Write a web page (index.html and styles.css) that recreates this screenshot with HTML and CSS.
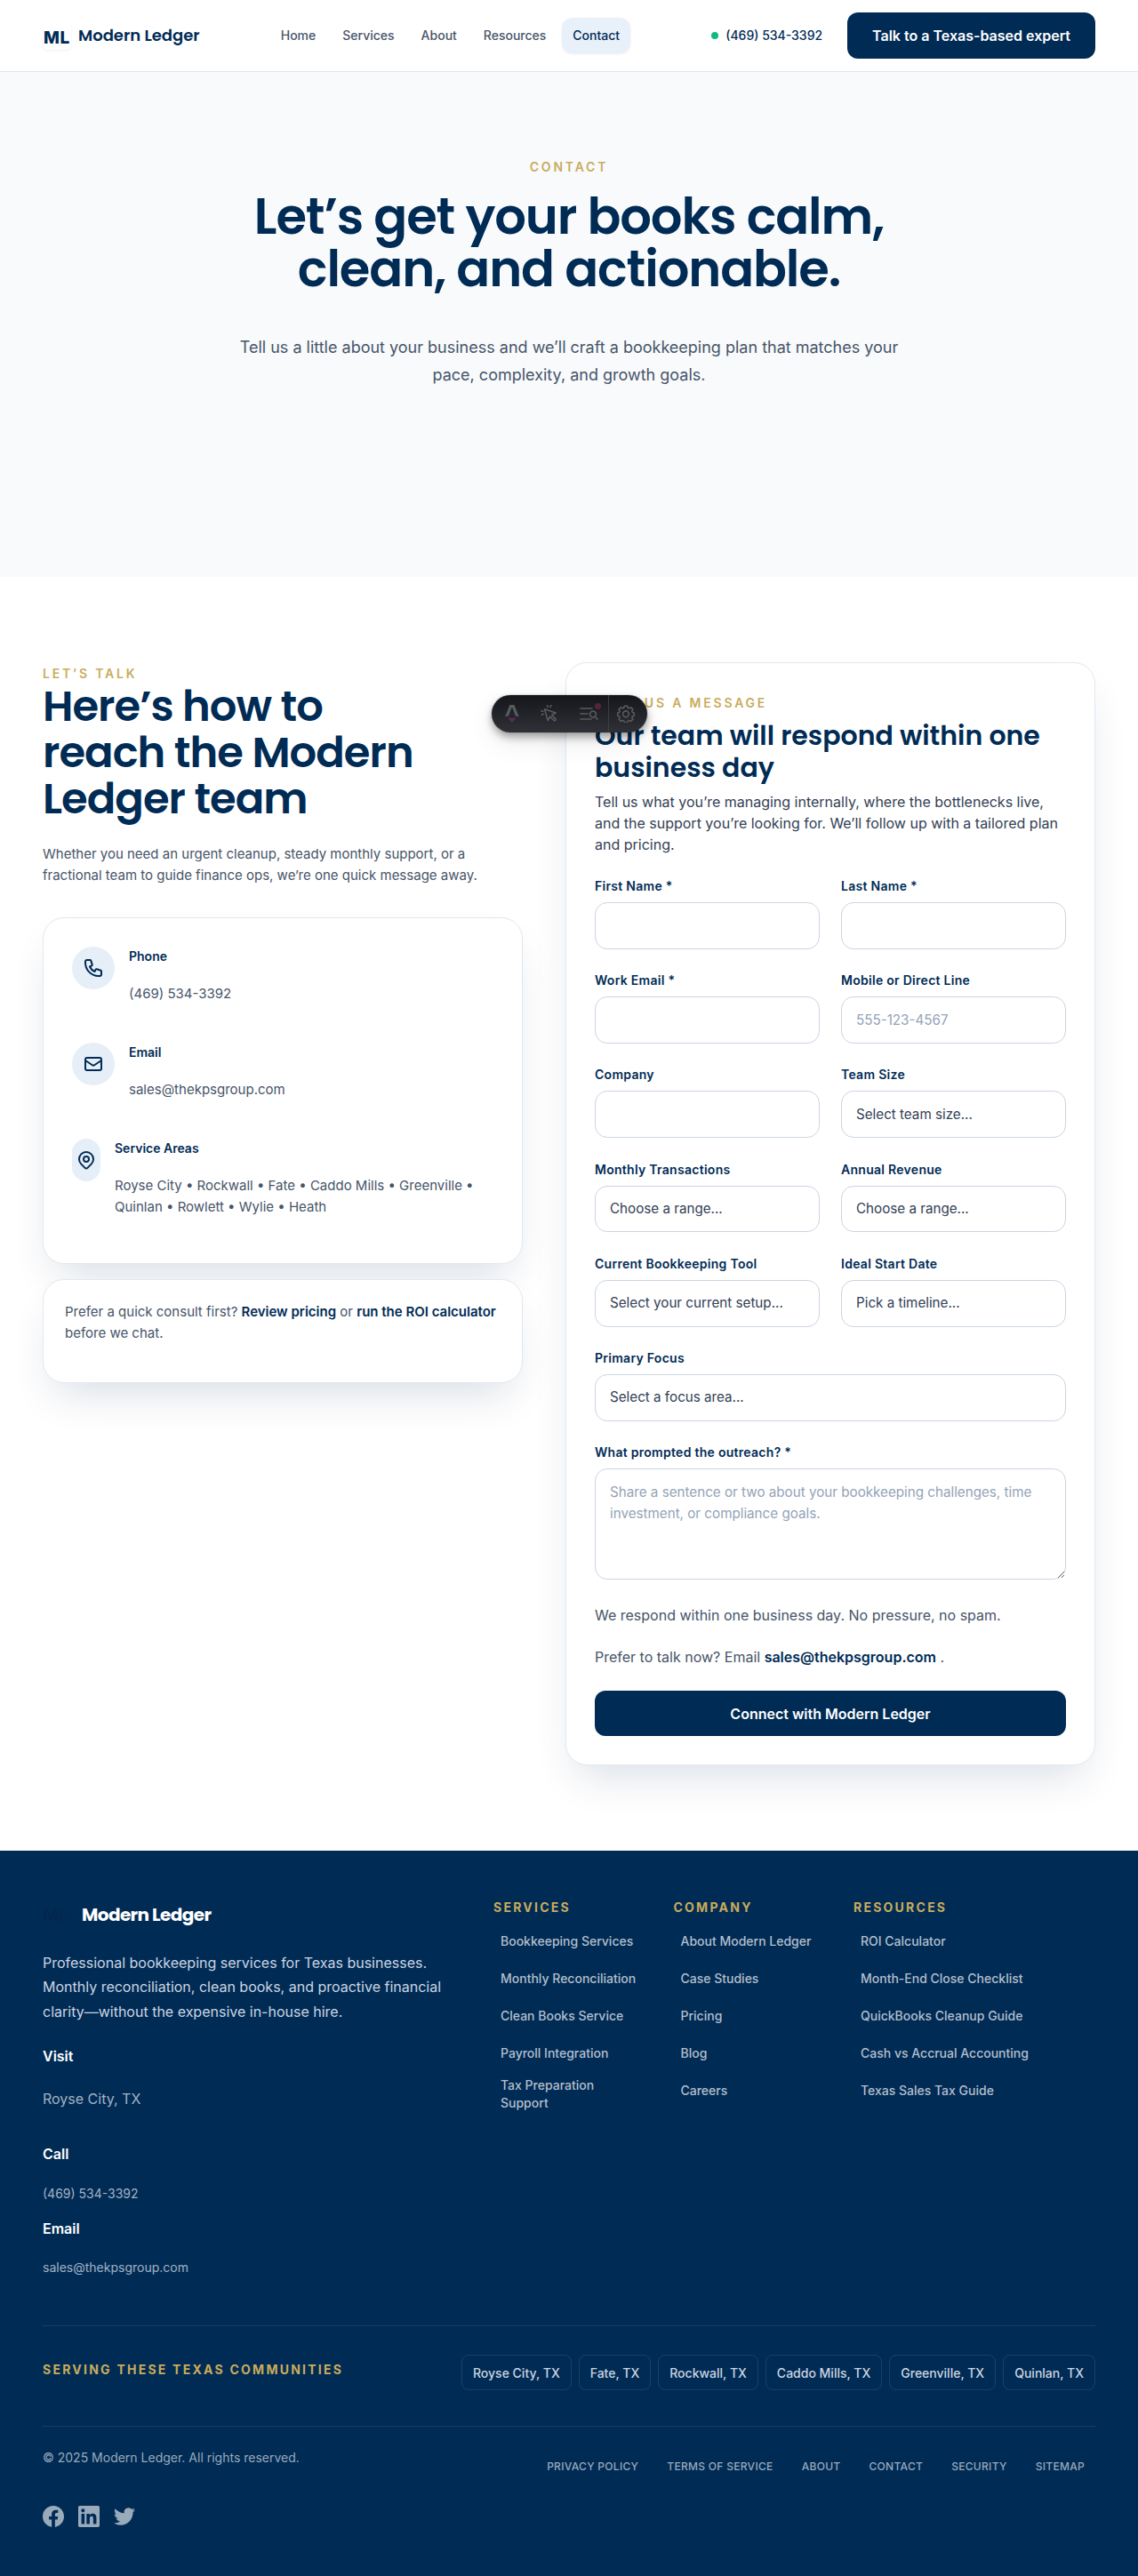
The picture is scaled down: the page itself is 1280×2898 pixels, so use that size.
FILE: index.html
```html
<!DOCTYPE html>
<html lang="en">
<head>
<meta charset="utf-8">
<title>Contact | Modern Ledger</title>
<link rel="stylesheet" href="styles.css">
</head>
<body>
<header class="site-header">
  <a class="brand" href="#"><span class="brand-mark">ML</span><span class="brand-name">Modern Ledger</span></a>
  <nav class="nav">
    <a href="#">Home</a><a href="#">Services</a><a href="#">About</a><a href="#">Resources</a><a class="active" href="#">Contact</a>
  </nav>
  <div class="header-cta">
    <a class="header-phone" href="#"><i class="status-dot"></i>(469) 534-3392</a>
    <a class="btn" href="#">Talk to a Texas-based expert</a>
  </div>
</header>

<main>
  <section class="hero">
    <p class="eyebrow">CONTACT</p>
    <h1>Let’s get your books calm, clean, and actionable.</h1>
    <p class="hero-text">Tell us a little about your business and we’ll craft a bookkeeping plan that matches your pace, complexity, and growth goals.</p>
  </section>

  <section class="contact">
    <div class="intro">
      <p class="eyebrow">LET’S TALK</p>
      <h2>Here’s how to reach the Modern Ledger team</h2>
      <p class="intro-text">Whether you need an urgent cleanup, steady monthly support, or a fractional team to guide finance ops, we’re one quick message away.</p>
      <ul class="card methods">
        <li>
          <span class="method-icon"><svg viewBox="0 0 24 24"><path d="M3 5a2 2 0 012-2h3.28a1 1 0 01.948.684l1.498 4.493a1 1 0 01-.502 1.21l-2.257 1.13a11.042 11.042 0 005.516 5.516l1.13-2.257a1 1 0 011.21-.502l4.493 1.498a1 1 0 01.684.949V19a2 2 0 01-2 2h-1C9.716 21 3 14.284 3 6V5z"/></svg></span>
          <div><h3>Phone</h3><p>(469) 534-3392</p></div>
        </li>
        <li>
          <span class="method-icon"><svg viewBox="0 0 24 24"><path d="M3 8l7.89 5.26a2 2 0 002.22 0L21 8M5 19h14a2 2 0 002-2V7a2 2 0 00-2-2H5a2 2 0 00-2 2v10a2 2 0 002 2z"/></svg></span>
          <div><h3>Email</h3><p>sales@thekpsgroup.com</p></div>
        </li>
        <li>
          <span class="method-icon narrow"><svg viewBox="0 0 24 24"><path d="M17.657 16.657L13.414 20.9a1.998 1.998 0 01-2.827 0l-4.244-4.243a8 8 0 1111.314 0z"/><path d="M15 11a3 3 0 11-6 0 3 3 0 016 0z"/></svg></span>
          <div><h3>Service Areas</h3><p>Royse City • Rockwall • Fate • Caddo Mills • Greenville • Quinlan • Rowlett • Wylie • Heath</p></div>
        </li>
      </ul>
      <div class="card consult"><p>Prefer a quick consult first? <a href="#">Review pricing</a> or <a href="#">run the ROI calculator</a> before we chat.</p></div>
    </div>

    <form class="card form">
      <p class="eyebrow">SEND US A MESSAGE</p>
      <h3>Our team will respond within one business day</h3>
      <p class="form-text">Tell us what you’re managing internally, where the bottlenecks live, and the support you’re looking for. We’ll follow up with a tailored plan and pricing.</p>
      <div class="fields">
        <label>First Name *<input type="text"></label>
        <label>Last Name *<input type="text"></label>
        <label>Work Email *<input type="email"></label>
        <label>Mobile or Direct Line<input type="tel" placeholder="555-123-4567"></label>
        <label>Company<input type="text"></label>
        <label>Team Size<select><option>Select team size...</option></select></label>
        <label>Monthly Transactions<select><option>Choose a range...</option></select></label>
        <label>Annual Revenue<select><option>Choose a range...</option></select></label>
        <label>Current Bookkeeping Tool<select><option>Select your current setup...</option></select></label>
        <label>Ideal Start Date<select><option>Pick a timeline...</option></select></label>
        <label class="wide">Primary Focus<select><option>Select a focus area...</option></select></label>
        <label class="wide">What prompted the outreach? *<textarea placeholder="Share a sentence or two about your bookkeeping challenges, time investment, or compliance goals."></textarea></label>
      </div>
      <p class="form-note">We respond within one business day. No pressure, no spam.</p>
      <p class="form-note">Prefer to talk now? Email <a href="#">sales@thekpsgroup.com</a> .</p>
      <button class="btn submit" type="button">Connect with Modern Ledger</button>
    </form>
  </section>
</main>

<footer class="footer">
  <div class="footer-top">
    <div class="footer-brand">
      <a class="footer-logo" href="#"><span class="footer-mark">ML</span><span>Modern Ledger</span></a>
      <p class="footer-about">Professional bookkeeping services for Texas businesses. Monthly reconciliation, clean books, and proactive financial clarity—without the expensive in-house hire.</p>
      <dl>
        <dt>Visit</dt><dd class="place">Royse City, TX</dd>
        <dt>Call</dt><dd>(469) 534-3392</dd>
        <dt>Email</dt><dd>sales@thekpsgroup.com</dd>
      </dl>
    </div>
    <div class="footer-col"><h4>SERVICES</h4><ul><li>Bookkeeping Services</li><li>Monthly Reconciliation</li><li>Clean Books Service</li><li>Payroll Integration</li><li>Tax Preparation Support</li></ul></div>
    <div class="footer-col"><h4>COMPANY</h4><ul><li>About Modern Ledger</li><li>Case Studies</li><li>Pricing</li><li>Blog</li><li>Careers</li></ul></div>
    <div class="footer-col"><h4>RESOURCES</h4><ul><li>ROI Calculator</li><li>Month-End Close Checklist</li><li>QuickBooks Cleanup Guide</li><li>Cash vs Accrual Accounting</li><li>Texas Sales Tax Guide</li></ul></div>
  </div>
  <div class="footer-areas">
    <h4>SERVING THESE TEXAS COMMUNITIES</h4>
    <div class="chips"><span>Royse City, TX</span><span>Fate, TX</span><span>Rockwall, TX</span><span>Caddo Mills, TX</span><span>Greenville, TX</span><span>Quinlan, TX</span></div>
  </div>
  <div class="footer-bottom">
    <div>
      <p class="copyright">© 2025 Modern Ledger. All rights reserved.</p>
      <div class="social">
        <svg viewBox="0 0 24 24"><path d="M24 12.073c0-6.627-5.373-12-12-12s-12 5.373-12 12c0 5.99 4.388 10.954 10.125 11.854v-8.385H7.078v-3.47h3.047V9.43c0-3.007 1.792-4.669 4.533-4.669 1.312 0 2.686.235 2.686.235v2.953H15.83c-1.491 0-1.956.925-1.956 1.874v2.25h3.328l-.532 3.47h-2.796v8.385C19.612 23.027 24 18.062 24 12.073z"/></svg>
        <svg viewBox="0 0 24 24"><path d="M20.447 20.452h-3.554v-5.569c0-1.328-.027-3.037-1.852-3.037-1.853 0-2.136 1.445-2.136 2.939v5.667H9.351V9h3.414v1.561h.046c.477-.9 1.637-1.85 3.37-1.85 3.601 0 4.267 2.37 4.267 5.455v6.286zM5.337 7.433c-1.144 0-2.063-.926-2.063-2.065 0-1.138.92-2.063 2.063-2.063 1.14 0 2.064.925 2.064 2.063 0 1.139-.925 2.065-2.064 2.065zm1.782 13.019H3.555V9h3.564v11.452zM22.225 0H1.771C.792 0 0 .774 0 1.729v20.542C0 23.227.792 24 1.771 24h20.451C23.2 24 24 23.227 24 22.271V1.729C24 .774 23.2 0 22.222 0h.003z"/></svg>
        <svg viewBox="0 0 24 24"><path d="M23.953 4.57a10 10 0 01-2.825.775 4.958 4.958 0 002.163-2.723c-.951.555-2.005.959-3.127 1.184a4.92 4.92 0 00-8.384 4.482C7.69 8.095 4.067 6.13 1.64 3.162a4.822 4.822 0 00-.666 2.475c0 1.71.87 3.213 2.188 4.096a4.904 4.904 0 01-2.228-.616v.06a4.923 4.923 0 003.946 4.827 4.996 4.996 0 01-2.212.085 4.936 4.936 0 004.604 3.417 9.867 9.867 0 01-6.102 2.105c-.39 0-.779-.023-1.17-.067a13.995 13.995 0 007.557 2.209c9.053 0 13.998-7.496 13.998-13.985 0-.21 0-.42-.015-.63A9.935 9.935 0 0024 4.59z"/></svg>
      </div>
    </div>
    <nav class="legal"><a href="#">PRIVACY POLICY</a><a href="#">TERMS OF SERVICE</a><a href="#">ABOUT</a><a href="#">CONTACT</a><a href="#">SECURITY</a><a href="#">SITEMAP</a></nav>
  </div>
</footer>

<div class="dev-toolbar">
  <span class="tool"><svg width="16" height="21" viewBox="0 0 16 21"><path class="solid" d="M5.4 0h5l5.3 13.4c-1.2-.6-2.6-1-4-1.200L8.400 3.400c-.1-.4-.9-.4-1 0L4.100 12.200c-1.400.2-2.800.6-4.100 1.200z"/><path class="flame" d="M4 14c1 .9 6.700.9 7.700 0 .4 1.800-.9 2.800-1.800 3.400-.6.5-1.100 1.300-1.800 2.700-.8-1.400-1.900-2-2.500-2.700C4.700 16.600 3.800 15.500 4 14z"/></svg></span>
  <span class="tool"><svg width="20" height="20" viewBox="0 0 20 20"><path d="M4.500 4.800l3.700 12.700 2.600-4.500 4 4.300a1.200 1.200 0 0 0 1.900-1.700l-4-4.300 4.500-2.300zM7.500.5l.5 2M11.800.6l-.8 1.900M.8 6.800l2 .5M1.200 11.200l1.800-1"/></svg></span>
  <span class="tool"><svg width="21" height="20" viewBox="0 0 21 20"><path d="M1 4h13M1 10h8M1 16h12"/><circle cx="15" cy="10.500" r="3.400"/><path d="M17.300 13.200l2.700 3"/></svg><i class="alert"></i></span>
  <span class="tool last"><svg width="20" height="20" viewBox="0 0 20 20"><path d="M8.300 1.200h3.400l.5 2 1.500.7 1.900-1.100 2.300 2.300-1.100 1.900.6 1.500 2 .5v3.300l-2 .5-.6 1.500 1.100 1.900-2.300 2.300-1.900-1.100-1.500.7-.5 2H8.300l-.5-2-1.500-.7-1.900 1.100-2.300-2.300 1.100-1.900-.6-1.500-2-.5V9l2-.5.6-1.500-1.100-1.900 2.300-2.300 1.900 1.100 1.500-.7z"/><circle cx="10" cy="10.300" r="3.400"/></svg></span>
</div>
</body>
</html>
```
FILE: styles.css
```css
:root {
  --navy: #002b55;
  --gold: #c9ac5c;
  --slate: #475569;
  --line: #e2e8f0;
}
* { box-sizing: border-box; }
body, h1, h2, h3, h4, p, ul, dl, dd { margin: 0; padding: 0; }
body {
  position: relative;
  background: #fff;
  color: var(--slate);
  font-family: Inter, "Liberation Sans", sans-serif;
  font-size: 16px;
  line-height: 1.6;
}
ul { list-style: none; }
a { color: inherit; text-decoration: none; }
h1, h2, h3 { color: var(--navy); font-family: Poppins, Inter, sans-serif; font-weight: 600; }

.eyebrow { color: var(--gold); font-size: 14px; font-weight: 600; letter-spacing: .2em; line-height: 23px; }
.btn {
  display: flex; align-items: center; justify-content: center;
  height: 52px; padding: 0 28px;
  border: 0; border-radius: 12px;
  background: var(--navy); color: #fff;
  font: 600 16px/1 Inter, sans-serif;
}

/* Header */
.site-header {
  display: flex; align-items: center; justify-content: space-between;
  height: 81px; padding: 0 48px;
  border-bottom: 1px solid var(--line);
}
.brand { display: flex; align-items: center; gap: 8px; color: var(--navy); }
.brand-mark {
  display: grid; place-items: center;
  width: 32px; height: 32px; padding-top: 4px;
  border-radius: 6px; box-shadow: 0 1px 3px rgba(0, 43, 85, .07);
  font-size: 19px; font-weight: 800; line-height: 1; letter-spacing: .7px;
}
.brand-name { font: 600 18px/28px Poppins, Inter, sans-serif; }
.nav { display: flex; gap: 6px; font-size: 14px; font-weight: 500; }
.nav a { padding: 0 12px; border-radius: 12px; line-height: 40px; }
.nav .active { background: #e8f0f9; color: var(--navy); box-shadow: 0 1px 3px rgba(0, 43, 85, .08); }
.header-cta { display: flex; align-items: center; gap: 16px; }
.header-phone { display: flex; align-items: center; gap: 8px; padding: 0 12px; color: var(--navy); font-size: 14px; font-weight: 500; }
.status-dot { width: 8px; height: 8px; border-radius: 50%; background: #10b981; }

/* Hero */
.hero {
  display: flex; flex-direction: column; align-items: center;
  height: 568px; padding-top: 95px;
  background: #f8fafc; text-align: center;
}
.hero h1 { width: 820px; margin-top: 16px; font-size: 56px; line-height: 58.8px; letter-spacing: -.02em; }
.hero-text { width: 768px; margin-top: 43.5px; font-size: 18px; line-height: 30.6px; }

/* Contact details and form */
.contact {
  display: grid; grid-template-columns: 540px 1fr; gap: 48px; align-items: start;
  padding: 96px 48px;
}
.card {
  border: 1px solid var(--line); border-radius: 24px; background: #fff;
  box-shadow: 0 24px 48px -14px rgba(0, 43, 85, .16);
}
.intro { padding-top: 1px; }
.intro h2 { width: 440px; font-size: 48px; line-height: 51.84px; letter-spacing: -.02em; }
.intro-text { margin-top: 24.7px; font-size: 15px; line-height: 24px; }
.methods { display: flex; flex-direction: column; gap: 24.5px; margin-top: 35px; padding: 32px; }
.methods li { display: flex; gap: 16px; }
.method-icon {
  display: grid; place-items: center; flex: none;
  width: 48px; height: 48px; border-radius: 24px; background: #e6eef8;
}
.method-icon.narrow { width: 32px; border-radius: 16px; }
.method-icon svg { width: 24px; height: 24px; fill: none; stroke: var(--navy); stroke-width: 2; stroke-linecap: round; stroke-linejoin: round; }
.methods h3 { font: 600 14px/22px Inter, sans-serif; }
.methods p { margin: 18.5px 0 19px; font-size: 15px; line-height: 24px; }
.consult { margin-top: 17px; padding: 24px; }
.consult p { margin-bottom: 19.5px; font-size: 15px; line-height: 24px; }
.consult a, .form-note a { color: var(--navy); font-weight: 600; }

.form { padding: 32px; }
.form .eyebrow { line-height: 25.6px; }
.form h3 { margin-top: 6px; font-size: 30px; line-height: 36px; }
.form-text { margin-top: 8.5px; color: #334155; line-height: 24px; }
.fields { display: grid; grid-template-columns: 1fr 1fr; gap: 25.4px 24px; margin-top: 25px; }
.fields label { display: flex; flex-direction: column; color: var(--navy); font-size: 14px; font-weight: 600; line-height: 20px; letter-spacing: .02em; }
.fields .wide { grid-column: 1 / -1; }
.fields input, .fields select, .fields textarea {
  width: 100%; height: 52.8px; margin-top: 8px; padding: 0 16px;
  border: 1px solid #cbd5e1; border-radius: 14px; background: #fff;
  color: #334155; font: 400 15.2px/24px Inter, sans-serif;
  appearance: none;
}
.fields textarea { height: 125px; padding: 14px 16px; }
.fields ::placeholder { color: #94a3b8; opacity: 1; }
.form-note { margin-top: 21.4px; }
.fields + .form-note { margin-top: 27.9px; }
.submit { width: 100%; height: 51px; margin-top: 24.6px; }

/* Footer */
.footer { height: 816px; padding: 48px 48px 0; background: var(--navy); color: #cbd5e1; }
.footer-top { display: grid; grid-template-columns: 475px 170.5px 170.5px 1fr; gap: 32px; height: 486px; }
.footer-logo { display: flex; align-items: center; gap: 12px; height: 48px; color: #fff; font: 700 20px/1 Poppins, Inter, sans-serif; letter-spacing: -.03em; }
.footer-mark { width: 32px; color: #00284f; font: 700 19.5px/1 Inter, sans-serif; }
.footer-about { margin-top: 16.5px; line-height: 27.4px; }
.footer dl { margin-top: 24px; }
.footer dt { color: #fff; font-weight: 600; }
.footer dd { margin: 20.2px 0 15.4px; color: #a3b2c3; font-size: 14px; line-height: 22.4px; }
.footer .place { margin: 22px 0 36.9px; font-size: 16px; line-height: 25.6px; }
.footer h4 { color: var(--gold); font: 700 14px/22px Inter, sans-serif; letter-spacing: .16em; }
.footer-col { padding-top: 5px; }
.footer-col ul { margin-top: 6px; }
.footer-col li { display: flex; align-items: center; min-height: 42px; padding: 5px 8px; color: #b3bfcc; font-size: 14px; font-weight: 500; line-height: 20px; }
.footer-areas {
  display: flex; justify-content: space-between; height: 113px; padding-top: 32px;
  border-top: 1px solid rgba(255, 255, 255, .1);
}
.footer-areas h4 { margin-top: 6px; }
.chips { display: flex; gap: 8px; color: #cbd5e1; font-size: 14px; font-weight: 500; }
.chips span { height: 40px; padding: 0 12px; border: 1px solid rgba(255, 255, 255, .1); border-radius: 8px; line-height: 39px; }
.footer-bottom { display: flex; justify-content: space-between; padding-top: 24px; border-top: 1px solid rgba(255, 255, 255, .1); }
.copyright { color: #98a9ba; font-size: 14px; line-height: 22.4px; }
.social { display: flex; gap: 16px; margin-top: 42px; }
.social svg { width: 24px; height: 24px; fill: #99aabb; }
.legal { display: flex; gap: 8px; color: #98a9ba; font-size: 12px; font-weight: 500; letter-spacing: .025em; line-height: 41px; }
.legal a { padding: 0 12px; }

/* Floating toolbar */
.dev-toolbar {
  position: absolute; top: 782px; left: 552.5px;
  display: flex; width: 175.5px; height: 42px;
  border-radius: 21px;
  background: linear-gradient(#15161b, #303136);
  box-shadow: 0 0 1px #000, 0 5px 10px rgba(0, 0, 0, .35), 0 12px 30px rgba(0, 0, 0, .08);
}
.tool { position: relative; display: grid; place-items: center; width: 44px; height: 42px; }
.tool:first-child { padding-left: 4px; }
.tool svg { fill: none; stroke: #595a5e; stroke-width: 1.6; stroke-linecap: round; stroke-linejoin: round; }
.tool .solid { fill: #595a5e; stroke: none; }
.tool .flame { fill: #5a2a5c; stroke: none; }
.tool.last { border-left: 1px solid #3d3e43; padding-right: 5px; }
.alert { position: absolute; top: 9px; right: 8px; width: 7px; height: 7px; border-radius: 50%; background: #552636; }
```
